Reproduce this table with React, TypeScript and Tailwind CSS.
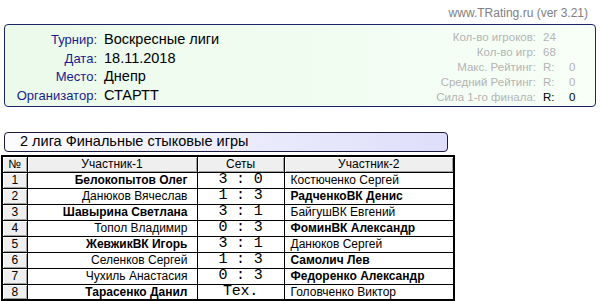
import React from 'react';

const sans = { fontFamily: '"Liberation Sans", Arial, sans-serif' };

interface Match {
  n: number;
  p1: string;
  p2: string;
  score: string;
  w: 1 | 2;
}

const matches: Match[] = [
  { n: 1, p1: 'Белокопытов Олег', p2: 'Костюченко Сергей', score: '3 : 0', w: 1 },
  { n: 2, p1: 'Данюков Вячеслав', p2: 'РадченкоВК Денис', score: '1 : 3', w: 2 },
  { n: 3, p1: 'Шавырина Светлана', p2: 'БайгушВК Евгений', score: '3 : 1', w: 1 },
  { n: 4, p1: 'Топол Владимир', p2: 'ФоминВК Александр', score: '0 : 3', w: 2 },
  { n: 5, p1: 'ЖевжикВК Игорь', p2: 'Данюков Сергей', score: '3 : 1', w: 1 },
  { n: 6, p1: 'Селенков Сергей', p2: 'Самолич Лев', score: '1 : 3', w: 2 },
  { n: 7, p1: 'Чухиль Анастасия', p2: 'Федоренко Александр', score: '0 : 3', w: 2 },
  { n: 8, p1: 'Тарасенко Данил', p2: 'Головченко Виктор', score: 'Тех.', w: 1 },
];

const info = [
  ['Турнир:', 'Воскресные лиги'],
  ['Дата:', '18.11.2018'],
  ['Место:', 'Днепр'],
  ['Организатор:', 'СТАРТТ'],
];

const stats = [
  ['Кол-во игроков:', '24'],
  ['Кол-во игр:', '68'],
  ['Макс. Рейтинг:', 'R0'],
  ['Средний Рейтинг:', 'R0'],
];

const bevel = 'bg-[#efefef] shadow-[inset_1px_1px_0_#ffffff,inset_-1px_-1px_0_#a0a0a0]';

function StatValue({ v, dark }: { v: string; dark?: boolean }) {
  if (v === 'R0') {
    return (
      <span className={`flex ${dark ? 'text-black' : 'text-[#b4b4b4]'}`}>
        <span className="w-[26px]">R:</span>
        <span>0</span>
      </span>
    );
  }
  return <span className="text-[#b4b4b4]">{v}</span>;
}

export default function App() {
  return (
    <div className="w-[600px] h-[301px] overflow-hidden bg-white text-black" style={sans}>
      <div className="h-[24px] flex justify-end items-start pt-[4px] pr-[12px] text-[12px] text-[#808080]">
        www.TRating.ru (ver 3.21)
      </div>

      <div className="mx-[4px] h-[83px] rounded-[4px] border border-[#1c2468] bg-gradient-to-r from-[#ebfaeb] to-[#f7fff7] flex justify-between">
        <div className="pt-[4px] flex flex-col">
          {info.map(([l, v]) => (
            <div key={l} className="flex items-baseline h-[18.7px]">
              <span className="w-[92px] text-right text-[13px] text-[#1a1a8c]">{l}</span>
              <span className="ml-[7px] text-[14.5px]">{v}</span>
            </div>
          ))}
        </div>
        <div className="pt-[4px] pr-[8px] flex flex-col text-[11.5px]">
          {stats.map(([l, v]) => (
            <div key={l} className="flex items-baseline h-[15px]">
              <span className="w-[130px] text-right text-[#b4b4b4]">{l}</span>
              <span className="ml-[7px] w-[44px]">
                <StatValue v={v} />
              </span>
            </div>
          ))}
          <div className="flex items-baseline h-[15px]">
            <span className="w-[130px] text-right text-[#b4b4b4]">Сила 1-го финала:</span>
            <span className="ml-[7px] w-[44px]">
              <StatValue v="R0" dark />
            </span>
          </div>
        </div>
      </div>

      <div className="mt-[25px] ml-[4px] w-[444px] h-[20px] rounded-[4px] border border-[#1a1a40] bg-gradient-to-r from-[#fcfcff] to-[#dedefa] flex items-center pl-[15px] text-[14.5px]">
        2 лига Финальные стыковые игры
      </div>

      <table className="mt-[3px] ml-[1px] w-[452px] border-collapse border-2 border-black text-[12px] table-fixed">
        <colgroup>
          <col className="w-[25px]" />
          <col className="w-[170px]" />
          <col className="w-[87px]" />
          <col className="w-[170px]" />
        </colgroup>
        <thead>
          <tr className="h-[16px]">
            {['№', 'Участник-1', 'Сеты', 'Участник-2'].map((h) => (
              <th key={h} className={`border border-black font-normal text-center p-0 leading-[14px] ${bevel}`}>
                {h}
              </th>
            ))}
          </tr>
        </thead>
        <tbody>
          {matches.map((m) => (
            <tr key={m.n} className="h-[16px]">
              <td className={`border border-black text-center p-0 leading-[14px] ${bevel}`}>{m.n}</td>
              <td className={`border border-black text-right pr-[9px] p-0 leading-[14px] ${m.w === 1 ? 'font-bold' : ''}`}>
                {m.p1}
              </td>
              <td
                className="border border-black text-center p-0 leading-[14px] text-[15px] tracking-[-0.2px] whitespace-pre"
                style={{ fontFamily: '"Liberation Mono", "Courier New", monospace' }}
              >
                {m.score}
              </td>
              <td className={`border border-black text-left pl-[6px] p-0 leading-[14px] ${m.w === 2 ? 'font-bold' : ''}`}>
                {m.p2}
              </td>
            </tr>
          ))}
        </tbody>
      </table>
    </div>
  );
}
